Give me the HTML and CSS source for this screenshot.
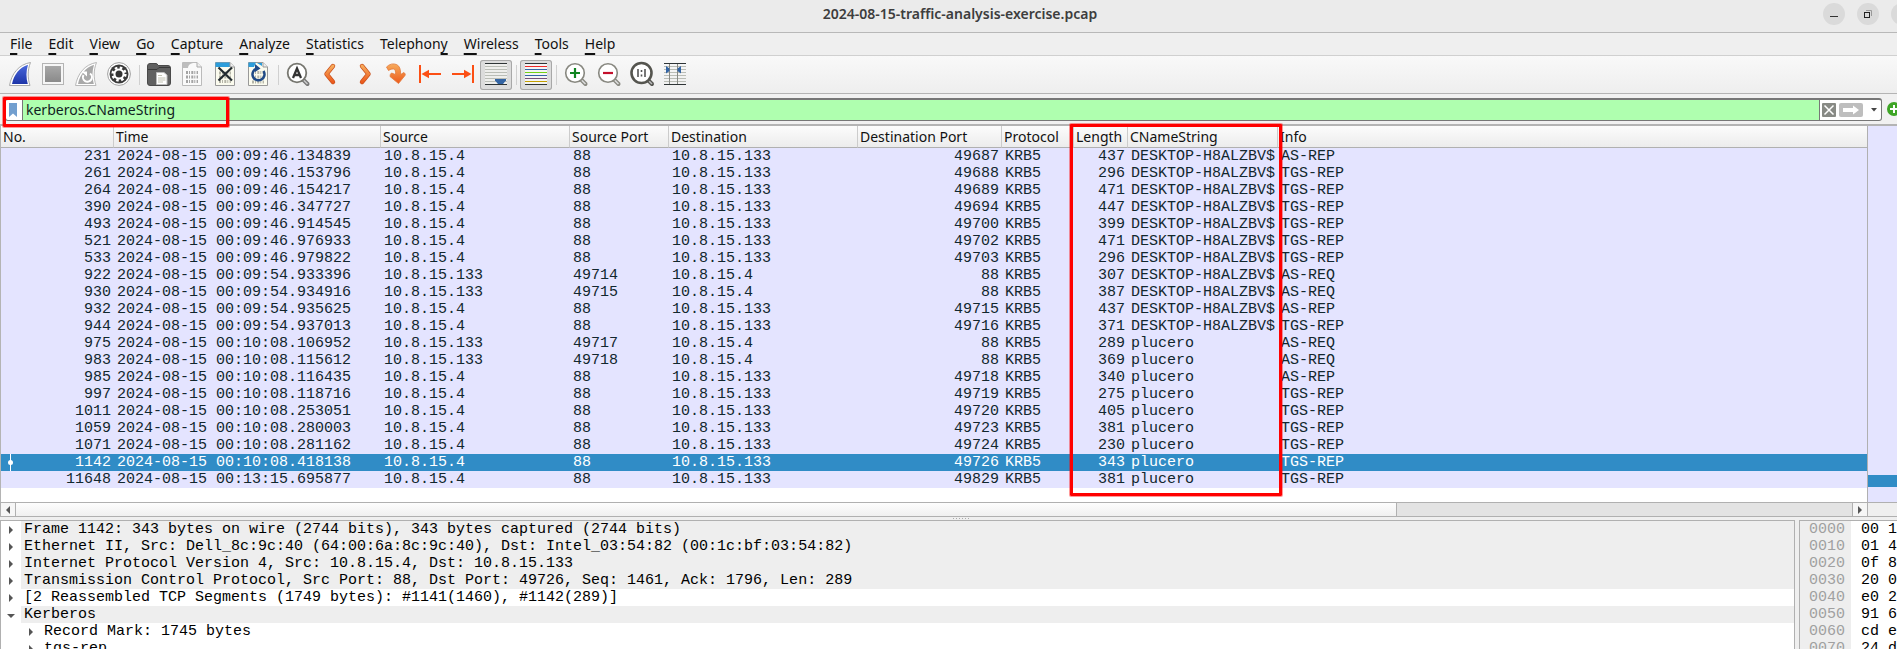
FILE: index.html
```html
<!DOCTYPE html>
<html lang="en">
<head>
<meta charset="utf-8">
<title>2024-08-15-traffic-analysis-exercise.pcap</title>
<link rel="stylesheet" href="styles.css">
</head>
<body>
<svg class="defs" width="0" height="0" aria-hidden="true">
  <defs>
    <linearGradient id="blue" x1="0" y1="0" x2="0" y2="1"><stop offset="0" stop-color="#4a68dc"/><stop offset="1" stop-color="#1d35a8"/></linearGradient>
    <linearGradient id="grey" x1="0" y1="0" x2="0" y2="1"><stop offset="0" stop-color="#a8a8a8"/><stop offset="1" stop-color="#8a8a8a"/></linearGradient>
    <linearGradient id="orange" x1="0" y1="0" x2="0" y2="1"><stop offset="0" stop-color="#f7ac5c"/><stop offset="1" stop-color="#ec5a1c"/></linearGradient>
  </defs>
</svg>

<header class="titlebar">
  <h1 class="title">2024-08-15-traffic-analysis-exercise.pcap</h1>
  <div class="window-controls">
    <button class="win" aria-label="Minimize"><svg width="22" height="22" viewBox="0 0 22 22"><path d="M7 13.500H15" stroke="#333"/></svg></button>
    <button class="win" aria-label="Restore"><svg width="22" height="22" viewBox="0 0 22 22" fill="none"><path d="M9 7.500H14.500V13" stroke="#999"/><rect x="7.500" y="9.500" width="5" height="5" stroke="#222"/></svg></button>
    <button class="win" aria-label="Close"></button>
  </div>
</header>

<nav class="menubar" aria-label="Main menu">
  <button><u>F</u>ile</button>
  <button><u>E</u>dit</button>
  <button><u>V</u>iew</button>
  <button><u>G</u>o</button>
  <button><u>C</u>apture</button>
  <button><u>A</u>nalyze</button>
  <button><u>S</u>tatistics</button>
  <button>Telephon<u>y</u></button>
  <button><u>W</u>ireless</button>
  <button><u>T</u>ools</button>
  <button><u>H</u>elp</button>
</nav>

<div class="toolbar" role="toolbar" aria-label="Capture tools">
  <button class="tool" aria-label="Start capture"><svg viewBox="0 0 32 30"><path d="M5.500 25.500C7.500 14 14.500 4.500 26.500 2.500C23.500 10 23.500 18 26 25.500Z" fill="#fff" stroke="#aaa"/><path d="M8 24C10 14.500 15.500 7.500 24 4.800C22 11.500 22 17.500 23.800 24Z" fill="url(#blue)"/></svg></button>
  <button class="tool" aria-label="Stop capture"><svg viewBox="0 0 32 30"><rect x="5.500" y="3.500" width="21" height="21" fill="#f6f6f6" stroke="#b4b4b4"/><rect x="8" y="6" width="16" height="16" fill="url(#grey)"/></svg></button>
  <button class="tool" aria-label="Restart capture"><svg viewBox="0 0 32 30"><path d="M5.500 25.500C7.500 14 14.500 4.500 26.500 2.500C23.500 10 23.500 18 26 25.500Z" fill="#fff" stroke="#b8b8b8"/><path d="M8 24C10 14.500 15.500 7.500 24 4.800C22 11.500 22 17.500 23.800 24Z" fill="#a9a9a9"/><path d="M20 13.500A4.500 4.500 0 1 1 13.500 15" fill="none" stroke="#fff" stroke-width="2"/><path d="M11.500 11.500H17V16.500Z" fill="#fff"/></svg></button>
  <button class="tool" aria-label="Capture options"><svg viewBox="0 0 32 30"><circle cx="16" cy="14" r="11.400" fill="#fff" stroke="#a0a0a0"/><circle cx="16" cy="14" r="9.500" fill="#3a3a3a"/><circle cx="16" cy="14" r="5.600" fill="#fff"/><circle cx="16" cy="14" r="6.300" fill="none" stroke="#fff" stroke-width="2.600" stroke-dasharray="2.500 2.450"/><circle cx="16" cy="14" r="3.500" fill="#333"/></svg></button>
  <span class="sep"></span>
  <button class="tool" aria-label="Open file"><svg viewBox="0 0 32 30"><path d="M4.500 6Q4.500 3.500 7 3.500H13Q14.500 3.500 15 5.500H25Q27.500 5.500 27.500 8V23Q27.500 25.500 25 25.500H7Q4.500 25.500 4.500 23Z" fill="#606060" stroke="#4a4a4a"/><path d="M5 9.500H14L16 7.500H27" stroke="#3a3a3a" fill="none"/><path d="M13.500 12.500H21L24 15V24.500H13.500Z" fill="#fff" stroke="#bbb"/><path d="M15 15.500H19M15 18H22.500M15 20H22.500M15 22H20" stroke="#c4c4b4"/></svg></button>
  <button class="tool" aria-label="Save file"><svg viewBox="0 0 32 30"><path d="M6.500 2.500H21L25.500 7V25.500H6.500Z" fill="#fafafa" stroke="#bbb"/><path d="M7 3H17Q12 4 12 8H7Z" fill="#bdbdbd"/><path d="M21 2.500V7H25.500" fill="#eee" stroke="#aaa"/><path d="M10 12.500H22M10 17H22M10 21.500H22" stroke="#a4a4a4" stroke-width="3" stroke-dasharray="2 1 1 1.300"/></svg></button>
  <button class="tool" aria-label="Close file"><svg viewBox="0 0 32 30"><path d="M6.500 2.500H21L25.500 7V25.500H6.500Z" fill="#fbfbee" stroke="#999"/><path d="M6.500 2.500H21V7H6.500Z" fill="#2c9ddb"/><path d="M21 2.500V7H25.500" fill="#eee" stroke="#999"/><path d="M10 13H22M10 17H22M10 21.500H22" stroke="#b5b5a8" stroke-width="3" stroke-dasharray="2 1 1 1.300"/><path d="M9.500 7.500L23 20.500M23 7.500L9.500 20.500" stroke="#222b30" stroke-width="2.200"/></svg></button>
  <button class="tool" aria-label="Reload file"><svg viewBox="0 0 32 30"><path d="M6.500 2.500H21L25.500 7V25.500H6.500Z" fill="#fbfbee" stroke="#999"/><path d="M6.500 2.500H14L12 7H6.500Z" fill="#2c9ddb"/><path d="M15 3H20V6Z" fill="#2c9ddb"/><path d="M21 2.500V7H25.500" fill="#eee" stroke="#999"/><path d="M10 12.500H22M10 17H22M10 22H22" stroke="#b5b5a8" stroke-width="3" stroke-dasharray="2 1 1 1.300"/><path d="M21.500 11A6 6 0 1 1 15 8.500" fill="none" stroke="#204a87" stroke-width="2.500"/><path d="M13 4L18.500 8.500L13 12Z" fill="#204a87"/></svg></button>
  <span class="sep"></span>
  <button class="tool" aria-label="Find packet"><svg viewBox="0 0 32 30"><path d="M20.500 19L25.500 24" stroke="#777" stroke-width="4" stroke-linecap="round"/><path d="M21 19.500L25.500 24" stroke="#ccc" stroke-width="1.500"/><circle cx="15" cy="13" r="9.300" fill="#fff" stroke="#777770" stroke-width="1.800"/><path d="M11 18L15 8.500L19 18M12.500 15H17.500" fill="none" stroke="#333" stroke-width="2.300"/></svg></button>
  <button class="tool" aria-label="Previous packet"><svg viewBox="0 0 32 30"><path d="M18 6L11.500 14L18 22" fill="none" stroke="#c9501c" stroke-width="4.400" stroke-linecap="round" stroke-linejoin="round"/><path d="M18 6L11.500 14L18 22" fill="none" stroke="url(#orange)" stroke-width="3" stroke-linecap="round" stroke-linejoin="round"/></svg></button>
  <button class="tool" aria-label="Next packet"><svg viewBox="0 0 32 30"><path d="M14 6L20.500 14L14 22" fill="none" stroke="#c9501c" stroke-width="4.400" stroke-linecap="round" stroke-linejoin="round"/><path d="M14 6L20.500 14L14 22" fill="none" stroke="url(#orange)" stroke-width="3" stroke-linecap="round" stroke-linejoin="round"/></svg></button>
  <button class="tool" aria-label="Go to packet"><svg viewBox="0 0 32 30"><path d="M5.500 7Q10 2.500 15.500 4.500Q20 6.500 19.500 14.500L23 12.500Q25 14 24 15.500L17.500 23.500L9 16.500Q9 14 10.500 13L14.500 14.500Q15 9.500 12.500 9Q10 8.500 7.500 10.500Z" fill="url(#orange)" stroke="#e2793a" stroke-width=".8"/></svg></button>
  <button class="tool" aria-label="First packet"><svg viewBox="0 0 32 30"><path d="M6 5V23" stroke="#fc4f14" stroke-width="2"/><path d="M13 14H27" stroke="#fc4f14" stroke-width="2"/><path d="M7.500 14L15 9.800V18.200Z" fill="#fc4f14"/></svg></button>
  <button class="tool" aria-label="Last packet"><svg viewBox="0 0 32 30"><path d="M26 5V23" stroke="#fc4f14" stroke-width="2"/><path d="M5 14H19" stroke="#fc4f14" stroke-width="2"/><path d="M24.500 14L17 9.800V18.200Z" fill="#fc4f14"/></svg></button>
  <button class="tool pressed" aria-label="Auto scroll" aria-pressed="true"><svg viewBox="0 0 32 30"><rect x="5" y="3" width="22" height="22" fill="#eeeeec"/><path d="M5 3.500H27M5 24.500H27" stroke="#2e3436"/><path d="M5 6.500H27M5 9.500H27M5 12.500H27M5 15.500H27M5 18.500H27M5 21.500H27" stroke="#babdb6"/><path d="M15 19H26V20.500L23 24H18L15 20.500Z" fill="#3465a4"/></svg></button>
  <span class="sep"></span>
  <button class="tool pressed" aria-label="Colorize" aria-pressed="true"><svg viewBox="0 0 32 30"><rect x="5" y="3" width="22" height="22" fill="#f4f4f4"/><path d="M5 3.500H27M5 24.500H27" stroke="#2e3436"/><path d="M5 6.500H27" stroke="#ef2929"/><path d="M5 9.500H27" stroke="#3465a4"/><path d="M5 12.500H27" stroke="#73d216"/><path d="M5 15.500H27" stroke="#3465a4"/><path d="M5 18.500H27" stroke="#75507b"/><path d="M5 21.500H27" stroke="#c4a000"/></svg></button>
  <span class="sep"></span>
  <button class="tool" aria-label="Zoom in"><svg viewBox="0 0 32 30"><path d="M20.500 19L25.500 24" stroke="#888880" stroke-width="4" stroke-linecap="round"/><path d="M21 19.500L25.500 24" stroke="#ddd" stroke-width="1.500"/><circle cx="15" cy="13" r="9.300" fill="#fff" stroke="#888880" stroke-width="1.600"/><path d="M10 13H20M15 8V18" stroke="#0f8420" stroke-width="2.200"/></svg></button>
  <button class="tool" aria-label="Zoom out"><svg viewBox="0 0 32 30"><path d="M20.500 19L25.500 24" stroke="#888880" stroke-width="4" stroke-linecap="round"/><path d="M21 19.500L25.500 24" stroke="#ddd" stroke-width="1.500"/><circle cx="15" cy="13" r="9.300" fill="#fff" stroke="#888880" stroke-width="1.600"/><path d="M10 13H20" stroke="#c4102c" stroke-width="2.200"/></svg></button>
  <button class="tool" aria-label="Normal size"><svg viewBox="0 0 32 30"><path d="M21 19L26 24" stroke="#555550" stroke-width="4" stroke-linecap="round"/><path d="M21.500 19.500L26 24" stroke="#bbb" stroke-width="1.500"/><circle cx="15.500" cy="13" r="10" fill="#fff" stroke="#55554f" stroke-width="2.600"/><path d="M12 9V17M19 9V17" stroke="#555" stroke-width="1.600"/><path d="M15.500 10V12M15.500 14.500V16.500" stroke="#555" stroke-width="1.600"/></svg></button>
  <button class="tool" aria-label="Resize columns"><svg viewBox="0 0 32 30"><path d="M5 3.500H27M5 24.500H27" stroke="#2e3436"/><path d="M5 6.500H27M5 9.500H27M5 12.500H27M5 15.500H27M5 18.500H27M5 21.500H27" stroke="#babdb6"/><path d="M10.500 4V24M18.500 4V24" stroke="#888a85"/><path d="M7 6L10.500 8.500V11L7 13.500ZM22 6L18.500 8.500V11L22 13.500Z" fill="#3465a4"/></svg></button>
</div>

<div class="filterbar">
  <div class="combo">
    <button class="bookmark" aria-label="Filter bookmarks"><svg width="16" height="20" viewBox="0 0 16 20"><path d="M3 3H11V17L7 13.500L3 17Z" fill="#729fcf"/></svg></button>
    <input class="filter" type="text" value="kerberos.CNameString" aria-label="Display filter" spellcheck="false">
    <button class="clear" aria-label="Clear filter"><svg width="14" height="14" viewBox="0 0 14 14"><rect width="14" height="14" rx="1" fill="#888a85"/><path d="M2.500 2.500L11.500 11.500M11.500 2.500L2.500 11.500" stroke="#fff" stroke-width="1.500"/></svg></button>
    <button class="apply" aria-label="Apply filter"><svg width="24" height="14" viewBox="0 0 24 14"><rect width="24" height="14" rx="2" fill="#bebebe"/><path d="M4 5H14V2.500L20 7L14 11.500V9H4Z" fill="#fff"/></svg></button>
    <button class="recent" aria-label="Recent filters"><svg width="8" height="6" viewBox="0 0 8 6"><path d="M1 1H7L4 4.500Z" fill="#444"/></svg></button>
  </div>
  <button class="add" aria-label="Add filter button"><svg width="14" height="14" viewBox="0 0 14 14"><circle cx="7" cy="7" r="7" fill="#3ea526"/><path d="M3 7H11M7 3V11" stroke="#fff" stroke-width="2"/></svg></button>
  <div class="mark mark-filter"></div>
</div>

<main class="main">
  <section class="list" aria-label="Packet list">
    <div class="packets">
      <table>
        <colgroup><col class="c-no"><col class="c-time"><col class="c-addr"><col class="c-sport"><col class="c-addr"><col class="c-dport"><col class="c-proto"><col class="c-len"><col class="c-cname"><col></colgroup>
        <thead><tr><th>No.</th><th>Time</th><th>Source</th><th>Source Port</th><th>Destination</th><th>Destination Port</th><th>Protocol</th><th>Length</th><th>CNameString</th><th>Info</th></tr></thead>
        <tbody>
          <tr><td>231</td><td>2024-08-15 00:09:46.134839</td><td>10.8.15.4</td><td>88</td><td>10.8.15.133</td><td>49687</td><td>KRB5</td><td>437</td><td>DESKTOP-H8ALZBV$</td><td>AS-REP</td></tr>
          <tr><td>261</td><td>2024-08-15 00:09:46.153796</td><td>10.8.15.4</td><td>88</td><td>10.8.15.133</td><td>49688</td><td>KRB5</td><td>296</td><td>DESKTOP-H8ALZBV$</td><td>TGS-REP</td></tr>
          <tr><td>264</td><td>2024-08-15 00:09:46.154217</td><td>10.8.15.4</td><td>88</td><td>10.8.15.133</td><td>49689</td><td>KRB5</td><td>471</td><td>DESKTOP-H8ALZBV$</td><td>TGS-REP</td></tr>
          <tr><td>390</td><td>2024-08-15 00:09:46.347727</td><td>10.8.15.4</td><td>88</td><td>10.8.15.133</td><td>49694</td><td>KRB5</td><td>447</td><td>DESKTOP-H8ALZBV$</td><td>TGS-REP</td></tr>
          <tr><td>493</td><td>2024-08-15 00:09:46.914545</td><td>10.8.15.4</td><td>88</td><td>10.8.15.133</td><td>49700</td><td>KRB5</td><td>399</td><td>DESKTOP-H8ALZBV$</td><td>TGS-REP</td></tr>
          <tr><td>521</td><td>2024-08-15 00:09:46.976933</td><td>10.8.15.4</td><td>88</td><td>10.8.15.133</td><td>49702</td><td>KRB5</td><td>471</td><td>DESKTOP-H8ALZBV$</td><td>TGS-REP</td></tr>
          <tr><td>533</td><td>2024-08-15 00:09:46.979822</td><td>10.8.15.4</td><td>88</td><td>10.8.15.133</td><td>49703</td><td>KRB5</td><td>296</td><td>DESKTOP-H8ALZBV$</td><td>TGS-REP</td></tr>
          <tr><td>922</td><td>2024-08-15 00:09:54.933396</td><td>10.8.15.133</td><td>49714</td><td>10.8.15.4</td><td>88</td><td>KRB5</td><td>307</td><td>DESKTOP-H8ALZBV$</td><td>AS-REQ</td></tr>
          <tr><td>930</td><td>2024-08-15 00:09:54.934916</td><td>10.8.15.133</td><td>49715</td><td>10.8.15.4</td><td>88</td><td>KRB5</td><td>387</td><td>DESKTOP-H8ALZBV$</td><td>AS-REQ</td></tr>
          <tr><td>932</td><td>2024-08-15 00:09:54.935625</td><td>10.8.15.4</td><td>88</td><td>10.8.15.133</td><td>49715</td><td>KRB5</td><td>437</td><td>DESKTOP-H8ALZBV$</td><td>AS-REP</td></tr>
          <tr><td>944</td><td>2024-08-15 00:09:54.937013</td><td>10.8.15.4</td><td>88</td><td>10.8.15.133</td><td>49716</td><td>KRB5</td><td>371</td><td>DESKTOP-H8ALZBV$</td><td>TGS-REP</td></tr>
          <tr><td>975</td><td>2024-08-15 00:10:08.106952</td><td>10.8.15.133</td><td>49717</td><td>10.8.15.4</td><td>88</td><td>KRB5</td><td>289</td><td>plucero</td><td>AS-REQ</td></tr>
          <tr><td>983</td><td>2024-08-15 00:10:08.115612</td><td>10.8.15.133</td><td>49718</td><td>10.8.15.4</td><td>88</td><td>KRB5</td><td>369</td><td>plucero</td><td>AS-REQ</td></tr>
          <tr><td>985</td><td>2024-08-15 00:10:08.116435</td><td>10.8.15.4</td><td>88</td><td>10.8.15.133</td><td>49718</td><td>KRB5</td><td>340</td><td>plucero</td><td>AS-REP</td></tr>
          <tr><td>997</td><td>2024-08-15 00:10:08.118716</td><td>10.8.15.4</td><td>88</td><td>10.8.15.133</td><td>49719</td><td>KRB5</td><td>275</td><td>plucero</td><td>TGS-REP</td></tr>
          <tr><td>1011</td><td>2024-08-15 00:10:08.253051</td><td>10.8.15.4</td><td>88</td><td>10.8.15.133</td><td>49720</td><td>KRB5</td><td>405</td><td>plucero</td><td>TGS-REP</td></tr>
          <tr><td>1059</td><td>2024-08-15 00:10:08.280003</td><td>10.8.15.4</td><td>88</td><td>10.8.15.133</td><td>49723</td><td>KRB5</td><td>381</td><td>plucero</td><td>TGS-REP</td></tr>
          <tr><td>1071</td><td>2024-08-15 00:10:08.281162</td><td>10.8.15.4</td><td>88</td><td>10.8.15.133</td><td>49724</td><td>KRB5</td><td>230</td><td>plucero</td><td>TGS-REP</td></tr>
          <tr class="selected"><td><svg class="related" width="7" height="17" viewBox="0 0 7 17"><path d="M3.500 0V17" stroke="#fff"/><circle cx="3.500" cy="8.500" r="2.500" fill="#fff"/></svg>1142</td><td>2024-08-15 00:10:08.418138</td><td>10.8.15.4</td><td>88</td><td>10.8.15.133</td><td>49726</td><td>KRB5</td><td>343</td><td>plucero</td><td>TGS-REP</td></tr>
          <tr><td>11648</td><td>2024-08-15 00:13:15.695877</td><td>10.8.15.4</td><td>88</td><td>10.8.15.133</td><td>49829</td><td>KRB5</td><td>381</td><td>plucero</td><td>TGS-REP</td></tr>
        </tbody>
      </table>
      <div class="mark mark-column"></div>
    </div>
    <div class="minimap"><div class="minimap-current"></div></div>
    <div class="hscroll">
      <button class="step" aria-label="Scroll left"><svg width="6" height="8" viewBox="0 0 6 8"><path d="M5 0V8L1 4Z" fill="#555"/></svg></button>
      <div class="track"><div class="thumb"></div></div>
      <button class="step" aria-label="Scroll right"><svg width="6" height="8" viewBox="0 0 6 8"><path d="M1 0V8L5 4Z" fill="#555"/></svg></button>
    </div>
    <div class="corner"></div>
  </section>

  <div class="splitter"><svg width="17" height="1" viewBox="0 0 17 1"><path d="M0 .5H17" stroke="#aaa" stroke-dasharray="1 2"/></svg></div>

  <section class="panes">
    <ul class="tree" aria-label="Packet details">
      <li class="shade"><svg class="twist" viewBox="0 0 8 8"><path d="M2 0V8L6 4Z"/></svg><span>Frame 1142: 343 bytes on wire (2744 bits), 343 bytes captured (2744 bits)</span></li>
      <li class="shade"><svg class="twist" viewBox="0 0 8 8"><path d="M2 0V8L6 4Z"/></svg><span>Ethernet II, Src: Dell_8c:9c:40 (64:00:6a:8c:9c:40), Dst: Intel_03:54:82 (00:1c:bf:03:54:82)</span></li>
      <li class="shade"><svg class="twist" viewBox="0 0 8 8"><path d="M2 0V8L6 4Z"/></svg><span>Internet Protocol Version 4, Src: 10.8.15.4, Dst: 10.8.15.133</span></li>
      <li class="shade"><svg class="twist" viewBox="0 0 8 8"><path d="M2 0V8L6 4Z"/></svg><span>Transmission Control Protocol, Src Port: 88, Dst Port: 49726, Seq: 1461, Ack: 1796, Len: 289</span></li>
      <li><svg class="twist" viewBox="0 0 8 8"><path d="M2 0V8L6 4Z"/></svg><span>[2 Reassembled TCP Segments (1749 bytes): #1141(1460), #1142(289)]</span></li>
      <li class="shade"><svg class="twist" viewBox="0 0 8 8"><path d="M0 3H8L4 7Z"/></svg><span>Kerberos</span></li>
      <li class="child"><svg class="twist" viewBox="0 0 8 8"><path d="M2 0V8L6 4Z"/></svg><span>Record Mark: 1745 bytes</span></li>
      <li class="child"><svg class="twist" viewBox="0 0 8 8"><path d="M2 0V8L6 4Z"/></svg><span>tgs-rep</span></li>
    </ul>
    <div class="hex" aria-label="Packet bytes">
      <pre class="offsets">0000
0010
0020
0030
0040
0050
0060
0070</pre>
      <pre class="bytes">00 1
01 4
0f 8
20 0
e0 2
91 6
cd e
24 d</pre>
    </div>
  </section>
</main>
</body>
</html>
```
FILE: styles.css
```css
* { box-sizing: border-box; }

body {
  margin: 0;
  height: 100vh;
  overflow: hidden;
  display: flex;
  flex-direction: column;
  background: #efefef;
  color: #111;
  font: 14px/20px "Noto Sans", "Open Sans", sans-serif;
}

button {
  margin: 0;
  padding: 0;
  border: 0;
  background: none;
  color: inherit;
  font: inherit;
}

svg { display: block; }
.defs { position: absolute; }

.titlebar {
  display: grid;
  grid-template-columns: 1fr auto 1fr;
  height: 33px;
  padding: 3px 0 7px 23px;
  background: #ebebeb;
  border-bottom: 1px solid #b8b8b8;
}
.title {
  grid-column: 2;
  margin: 0;
  font-size: 14px;
  line-height: 22px;
  font-weight: 600;
  color: #3d3d3d;
}
.window-controls {
  display: flex;
  justify-content: flex-end;
  gap: 12px;
  margin-right: -16px;
}
.win {
  width: 22px;
  height: 22px;
  border-radius: 50%;
  background: #dadada;
}

.menubar {
  display: flex;
  gap: 16px;
  height: 23px;
  padding-left: 10px;
  border-bottom: 1px solid #d0d0d0;
}
.menubar u {
  text-decoration-thickness: 2px;
  text-underline-offset: 4px;
  text-decoration-skip-ink: none;
}

.toolbar {
  display: flex;
  gap: 1px;
  height: 38px;
  padding: 4px 4px 3px;
  background: linear-gradient(#f9f9f9, #eeeeee);
  border-bottom: 1px solid #b4b4b4;
}
.tool {
  width: 32px;
  height: 30px;
}
.tool svg { width: 32px; height: 30px; }
.pressed {
  border-radius: 3px;
  background: #dcdcdc;
  box-shadow: inset 0 0 0 1px #a8a8a8;
}
.sep {
  width: 6px;
  height: 20px;
  margin-top: 5px;
  background: linear-gradient(#d0d0d0, #d0d0d0) 3px 0 / 1px 100% no-repeat;
}

.filterbar {
  position: relative;
  display: flex;
  align-items: center;
  gap: 5px;
  padding: 4px 0;
  margin-right: -4px;
  height: 30px;
  background: #f1f1f1;
}
.combo {
  flex: 1;
  display: flex;
  align-items: center;
  height: 23px;
  margin-left: 5px;
  border: 1px solid #777;
  border-top-width: 2px;
  border-radius: 3px;
  background: #fff;
}
.bookmark { width: 16px; }
.filter {
  flex: 1;
  height: 20px;
  min-width: 0;
  padding: 0 3px;
  border: solid #777;
  border-width: 0 1px;
  background: #afffaf;
  color: #122;
  font: inherit;
  outline: 0;
}
.clear { margin-left: 2px; }
.apply { margin-left: 3px; }
.recent { margin: 0 3px 0 7px; }

.mark {
  position: absolute;
  border: 3px solid #f00;
  border-radius: 1px;
  box-shadow: 0 0 0 1px rgba(255, 0, 0, .4);
  pointer-events: none;
}
.mark-filter { left: 3px; top: 3px; width: 226px; height: 30px; z-index: 1; }
.mark-column { left: 1069px; top: -2px; width: 212px; height: 372px; }

.main {
  flex: 1;
  min-height: 0;
  display: flex;
  flex-direction: column;
  border-top: 2px solid #b4b4b4;
}
.list {
  display: grid;
  grid-template-columns: 1fr 30px;
}
.packets {
  position: relative;
  padding-bottom: 14px;
  border-left: 1px solid #b4b4b4;
  background: #fff;
}
table {
  width: 100%;
  table-layout: fixed;
  border-collapse: separate;
  border-spacing: 0;
  font: 15px/17px "Liberation Mono", monospace;
  color: #12272e;
}
.c-no { width: 113px; }
.c-time { width: 267px; }
.c-addr { width: 189px; }
.c-sport { width: 99px; }
.c-dport { width: 144px; }
.c-proto { width: 72px; }
.c-len { width: 54px; }
.c-cname { width: 150px; }
th {
  height: 22px;
  padding: 0 2px;
  border-right: 1px solid #ccc;
  border-bottom: 1px solid #b0b0b0;
  background: linear-gradient(#fcfcfc, #ececec);
  color: #111;
  font: 14px/20px "Noto Sans", "Open Sans", sans-serif;
  text-align: left;
  white-space: nowrap;
}
th:last-child { border-right: 0; }
td {
  height: 17px;
  padding: 0 3px;
  background: #e4e4ff;
  white-space: nowrap;
}
td:nth-child(1), td:nth-child(6), td:nth-child(8) { text-align: right; }
td:first-child { position: relative; }
.selected td { background: #308cc6; color: #fff; }
.related { position: absolute; left: 6px; top: 0; }

.minimap {
  padding-top: 349px;
  border: solid #b0b0b0;
  border-width: 0 0 0 1px;
  background: #e4e4ff;
}
.minimap-current { height: 12px; background: #308cc6; }

.hscroll {
  display: flex;
  height: 15px;
  border: 1px solid #b0b0b0;
  border-right: 0;
}
.step {
  width: 14px;
  padding-left: 4px;
  background: #f6f6f6;
}
.track {
  flex: 1;
  border: solid #b0b0b0;
  border-width: 0 1px;
  background: #e3e3e3;
}
.thumb {
  width: 75.2%;
  height: 100%;
  border-right: 1px solid #b0b0b0;
  background: linear-gradient(#fdfdfd, #f0f0f0);
}
.corner { border: 1px solid #b0b0b0; border-right: 0; }

.splitter {
  display: flex;
  justify-content: center;
  height: 3px;
  padding-top: 1px;
  padding-left: 25px;
}

.panes {
  flex: 1;
  min-height: 0;
  display: grid;
  grid-template-columns: 1fr 98px;
  gap: 4px;
  font: 15px/17px "Liberation Mono", monospace;
  color: #000;
}
.tree {
  margin: 0;
  padding: 0;
  list-style: none;
  overflow: hidden;
  border: 1px solid #b0b0b0;
  border-bottom: 0;
  background: #fff;
}
.tree li {
  display: flex;
  align-items: center;
  height: 17px;
  white-space: nowrap;
}
.tree span {
  flex: 1;
  padding-left: 3px;
}
.shade span { background: #eee; }
.twist {
  flex: none;
  width: 8px;
  height: 8px;
  margin: 0 6px;
  fill: #555;
}
.child { padding-left: 20px; }

.hex {
  display: flex;
  overflow: hidden;
  border: solid #b0b0b0;
  border-width: 1px 0 0 1px;
  background: #fff;
}
.hex pre { margin: 0; font: inherit; }
.offsets {
  width: 54px;
  padding-left: 9px;
  background: #eee;
  color: #a0a0a0;
}
.bytes { padding-left: 10px; }
```
